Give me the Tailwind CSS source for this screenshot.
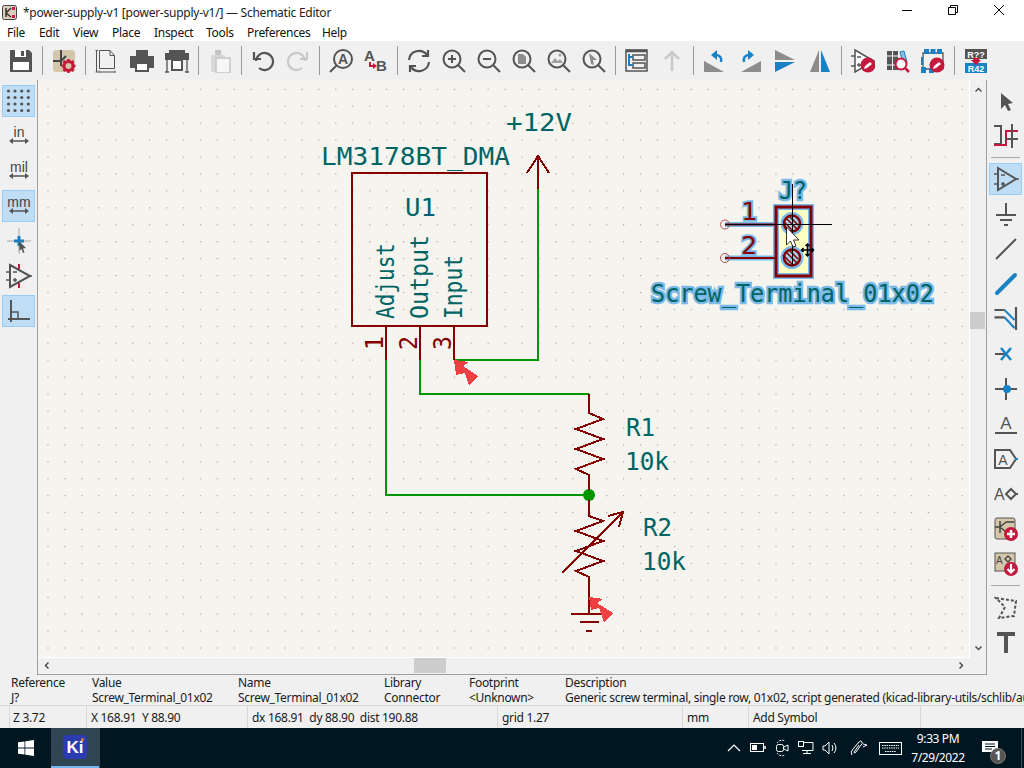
<!DOCTYPE html>
<html lang="en">
<head>
    <meta charset="UTF-8">
    <title>*power-supply-v1 [power-supply-v1/] — Schematic Editor</title>
    <script src="https://cdn.jsdelivr.net/npm/@tailwindcss/browser@4"></script>
</head>
<body class="w-[1024px] h-[768px] overflow-hidden flex flex-col bg-[#f0f0f0] text-[12px] leading-[15px] text-[#1a1a1a] font-['Noto_Sans',sans-serif]">

<!-- title bar -->
<div class="h-[24px] bg-white flex items-center text-[#222] relative">
    <svg class="ml-[2px] mr-[6px]" width="15" height="15" viewBox="0 0 15 15"><rect x=".5" y=".5" width="14" height="14" rx="2" fill="#dccfba" stroke="#444"/><path d="M4 3v9M4 8l5-5M4 8l5 4" stroke="#333" stroke-width="1.5" fill="none"/><rect x="10" y="2" width="3" height="3" fill="#d6125a"/><rect x="10" y="10" width="3" height="3" fill="#d6125a"/></svg>
    <span class="tracking-[-0.25px]">*power-supply-v1 [power-supply-v1/] — Schematic Editor</span>
    <div class="ml-auto flex h-full mr-[2px]">
        <div class="w-[46px] flex items-center justify-center pb-[4px]"><div class="w-[10px] h-px bg-black"></div></div>
        <div class="w-[46px] flex items-center justify-center pb-[4px]"><svg width="10" height="10" viewBox="0 0 10 10" fill="none" stroke="#000"><path d="M.5 2.5h7v7h-7zM2.5 2.5v-2h7v7h-2"/></svg></div>
        <div class="w-[46px] flex items-center justify-center pb-[4px]"><svg width="10" height="10" viewBox="0 0 10 10" stroke="#000"><path d="M0 0l10 10M10 0L0 10"/></svg></div>
    </div>
</div>

<!-- menu bar -->
<div class="h-[17px] pt-[1px] bg-white flex pl-[7px] gap-[14px] text-[#111] tracking-[-0.3px]">
    <span class="w-[18px]">File</span><span class="w-[20px]">Edit</span><span class="w-[25px]">View</span><span class="w-[28px]">Place</span><span class="w-[38px]">Inspect</span><span class="w-[27px]">Tools</span><span class="w-[61px]">Preferences</span><span>Help</span>
</div>

<!-- top toolbar -->
<div class="h-[39px] flex items-center pl-[3px]">
    <div class="w-[35px] flex justify-center"><svg width="24" height="24" viewBox="0 0 24 24"><path d="M1 1h19l3 3v19H1z" fill="#545454"/><rect x="4" y="13" width="16" height="8" fill="#fff"/><rect x="6" y="1" width="11" height="7" fill="#fff"/><rect x="12" y="2" width="3" height="5" fill="#545454"/></svg></div>
    <div class="w-[8px] flex justify-center"><div class="w-px h-[29px] bg-[#9a9a9a]"></div></div>
    <div class="w-[35px] flex justify-center"><svg width="24" height="24" viewBox="0 0 24 24"><rect x="1" y="1" width="22" height="22" rx="3" fill="#d3c6a9"/><path d="M9 1v8M1 12h9M9 8v9M9 12l5-5" stroke="#444" stroke-width="2" fill="none"/><g transform="translate(.5 1)"><circle cx="16" cy="16" r="4.500" fill="none" stroke="#c4183c" stroke-width="3"/><path d="M16 9v3M16 20v3M9 16h3M20 16h3M11 11l2 2M19 19l2 2M11 21l2-2M19 13l2-2" stroke="#c4183c" stroke-width="2.500"/></g></svg></div>
    <div class="w-[8px] flex justify-center"><div class="w-px h-[29px] bg-[#9a9a9a]"></div></div>
    <div class="w-[35px] flex justify-center"><svg width="24" height="24" viewBox="0 0 24 24" fill="none" stroke="#545454"><path d="M.5 1.500H3M.5 23H3M1.500 1.500V23M4.500 1.500H15l4.500 5V19.500H4.500zM15 1.500v5h4.500M4 21.500v3M20 21.500v3M4 23H20"/></svg></div>
    <div class="w-[35px] flex justify-center"><svg width="24" height="24" viewBox="0 0 24 24"><path d="M6 1h12v6H6z" fill="#545454"/><path d="M2 7h22v12h-5v-5H5v5H0V7z" fill="#545454"/><rect x="6" y="14" width="12" height="8" fill="#fff" stroke="#545454" stroke-width="2"/></svg></div>
    <div class="w-[35px] flex justify-center"><svg width="24" height="24" viewBox="0 0 24 24" fill="#545454"><rect x="4" y="1" width="16" height="4"/><rect y="4" width="24" height="7"/><path d="M2 11v12M22 11v12M0 23h4M20 23h4" stroke="#545454" stroke-width="1.300"/><rect x="7" y="11" width="10" height="10" fill="#fff" stroke="#545454" stroke-width="2"/></svg></div>
    <div class="w-[8px] flex justify-center"><div class="w-px h-[29px] bg-[#9a9a9a]"></div></div>
    <div class="w-[35px] flex justify-center"><svg width="24" height="24" viewBox="0 0 24 24"><rect x="3" y="6" width="14" height="17" fill="#d8d8d8"/><rect x="8" y="9" width="14" height="15" fill="#f6f6f6" stroke="#c4c4c4" stroke-width="1.500"/><rect x="7" y="1" width="6" height="5" fill="#c4c4c4"/></svg></div>
    <div class="w-[8px] flex justify-center"><div class="w-px h-[29px] bg-[#9a9a9a]"></div></div>
    <div class="w-[35px] flex justify-center"><svg width="24" height="24" viewBox="0 0 24 24" fill="none" stroke="#545454" stroke-width="2.200"><path d="M5 12a8.500 8.500 0 1 1 3 7"/><path d="M3 3v7h7"/></svg></div>
    <div class="w-[35px] flex justify-center"><svg width="24" height="24" viewBox="0 0 24 24" fill="none" stroke="#c8c8c8" stroke-width="2.200"><path d="M19 12a8.500 8.500 0 1 0-3 7"/><path d="M21 3v7h-7"/></svg></div>
    <div class="w-[8px] flex justify-center"><div class="w-px h-[29px] bg-[#9a9a9a]"></div></div>
    <div class="w-[35px] flex justify-center"><svg width="24" height="24" viewBox="0 0 24 24" fill="none" stroke="#545454" stroke-width="2"><circle cx="14" cy="10" r="9"/><path d="M8 16L1 23"/><text x="14" y="15" text-anchor="middle" font-size="14" font-weight="700" fill="#545454" stroke="none" font-family="Liberation Sans">A</text></svg></div>
    <div class="w-[35px] flex justify-center"><svg class="overflow-visible" width="24" height="24" viewBox="0 0 24 24"><text x="0" y="12" font-size="15" font-weight="700" fill="#545454" font-family="Liberation Sans">A</text><text x="12" y="22" font-size="15" font-weight="700" fill="#545454" font-family="Liberation Sans">B</text><path d="M6 13v4h4" fill="none" stroke="#c4183c" stroke-width="2"/><path d="M9 14l4 3-4 3z" fill="#c4183c"/></svg></div>
    <div class="w-[8px] flex justify-center"><div class="w-px h-[29px] bg-[#9a9a9a]"></div></div>
    <div class="w-[35px] flex justify-center"><svg width="24" height="24" viewBox="0 0 24 24" fill="none" stroke="#545454" stroke-width="2.200"><path d="M2 11A10 10 0 0 1 20 6M22 13A10 10 0 0 1 4 18"/><path d="M21 1v6h-6M3 23v-6h6"/></svg></div>
    <div class="w-[35px] flex justify-center"><svg width="24" height="24" viewBox="0 0 24 24" fill="none" stroke="#545454" stroke-width="2"><circle cx="10" cy="10" r="8.500"/><path d="M16 16l7 7M6 10h8M10 6v8"/></svg></div>
    <div class="w-[35px] flex justify-center"><svg width="24" height="24" viewBox="0 0 24 24" fill="none" stroke="#545454" stroke-width="2"><circle cx="10" cy="10" r="8.500"/><path d="M16 16l7 7M6 10h8"/></svg></div>
    <div class="w-[35px] flex justify-center"><svg width="24" height="24" viewBox="0 0 24 24" fill="none" stroke="#545454" stroke-width="2"><circle cx="10" cy="10" r="8.500"/><path d="M16 16l7 7"/><path d="M6 5h5l3 3v7H6z" fill="#8c8c8c" stroke="none"/></svg></div>
    <div class="w-[35px] flex justify-center"><svg width="24" height="24" viewBox="0 0 24 24" fill="none" stroke="#545454" stroke-width="2"><circle cx="10" cy="10" r="8.500"/><path d="M16 16l7 7"/><path d="M4 14l4-5 3 3 2-2 3 4z" fill="#a0a0a0" stroke="none"/><circle cx="13" cy="6" r="1.500" fill="#a0a0a0" stroke="none"/></svg></div>
    <div class="w-[35px] flex justify-center"><svg width="24" height="24" viewBox="0 0 24 24" fill="none" stroke="#545454" stroke-width="2"><circle cx="10" cy="10" r="8.500"/><path d="M16 16l7 7"/><path d="M7 4l8 7h-4l1 5-3-1z" fill="#8c8c8c" stroke="none"/></svg></div>
    <div class="w-[8px] flex justify-center"><div class="w-px h-[29px] bg-[#9a9a9a]"></div></div>
    <div class="w-[35px] flex justify-center"><svg width="24" height="24" viewBox="0 0 24 24" fill="none" stroke="#545454" stroke-width="1.500"><rect x="1" y="1" width="21" height="21"/><path d="M1 2h21" stroke-width="2.500"/><rect x="8" y="6" width="12" height="5"/><rect x="8" y="14" width="12" height="5"/><path d="M4 5v11h4M4 8h4" stroke="#1a81c4" stroke-width="2"/></svg></div>
    <div class="w-[35px] flex justify-center"><svg width="24" height="24" viewBox="0 0 24 24" fill="none" stroke="#c8c8c8" stroke-width="2.500"><path d="M12 22V3M5 10l7-7 7 7"/></svg></div>
    <div class="w-[8px] flex justify-center"><div class="w-px h-[29px] bg-[#9a9a9a]"></div></div>
    <div class="w-[35px] flex justify-center"><svg width="24" height="24" viewBox="0 0 24 24"><path d="M1 23V12l20 11z" fill="#8c8c8c"/><path d="M18 13c1-4-1-7-5-7" fill="none" stroke="#1a81c4" stroke-width="2.500"/><path d="M14 1l-6 5 6 5z" fill="#1a81c4"/></svg></div>
    <div class="w-[35px] flex justify-center"><svg width="24" height="24" viewBox="0 0 24 24"><path d="M23 23V12L3 23z" fill="#8c8c8c"/><path d="M6 13c-1-4 1-7 5-7" fill="none" stroke="#1a81c4" stroke-width="2.500"/><path d="M10 1l6 5-6 5z" fill="#1a81c4"/></svg></div>
    <div class="w-[35px] flex justify-center"><svg width="24" height="24" viewBox="0 0 24 24"><path d="M2 1v10h20z" fill="#8c8c8c"/><path d="M2 13v10l20-10z" fill="#1a81c4"/></svg></div>
    <div class="w-[35px] flex justify-center"><svg width="24" height="24" viewBox="0 0 24 24"><path d="M11 1v22H2z" fill="#8c8c8c"/><path d="M13 1v22h9z" fill="#1a81c4"/></svg></div>
    <div class="w-[8px] flex justify-center"><div class="w-px h-[29px] bg-[#9a9a9a]"></div></div>
    <div class="w-[35px] flex justify-center"><svg width="24" height="24" viewBox="0 0 24 24"><path d="M4 1l19 11-19 11z" fill="#fff" stroke="#545454" stroke-width="1.500"/><path d="M0 7h4M0 17h4M6 8h4M6 16h4M8 14v4" stroke="#545454" stroke-width="1.300"/><circle cx="17" cy="16" r="7.500" fill="#c4183c"/><path d="M13 20l1-3 5-4 2 2-5 4z" fill="#fff"/></svg></div>
    <div class="w-[35px] flex justify-center"><svg width="24" height="24" viewBox="0 0 24 24"><rect x="1" y="2" width="5" height="19" fill="#545454"/><rect x="7" y="2" width="5" height="19" fill="#545454"/><path d="M14 3l4-1 3 11-4 1z" fill="#8fc0e4" stroke="#1a81c4"/><path d="M1 7h11M1 16h11" stroke="#fff"/><circle cx="15" cy="15" r="5.500" fill="#ffffffcc" stroke="#c4183c" stroke-width="2"/><path d="M19 19l4 4" stroke="#c4183c" stroke-width="2.500"/></svg></div>
    <div class="w-[35px] flex justify-center"><svg width="24" height="24" viewBox="0 0 24 24"><path d="M2 4h20v16H2z" fill="none" stroke="#545454" stroke-width="1.300"/><path d="M3 0h5v5H3zM9.500 0h5v5h-5zM16 0h5v5h-5zM0 18h5v6H0zM8 19h5v5H8zM0 8h2v8H0z" fill="#1a81c4"/><circle cx="16" cy="16" r="7.500" fill="#c4183c"/><path d="M12 20l1-3 5-4 2 2-5 4z" fill="#fff"/></svg></div>
    <div class="w-[8px] flex justify-center"><div class="w-px h-[29px] bg-[#9a9a9a]"></div></div>
    <div class="w-[35px] flex justify-center"><svg width="24" height="24" viewBox="0 0 24 24" font-family="Liberation Sans" font-weight="700" font-size="9" text-anchor="middle" fill="#fff"><rect x="1" y="0" width="22" height="10" fill="#545454"/><rect x="1" y="14" width="22" height="10" fill="#1a81c4"/><text x="12" y="8.500">R??</text><text x="12" y="22.500">R42</text><path d="M9 9h6v2h2l-5 5-5-5h2z" fill="#c4183c"/></svg></div>
</div>

<!-- middle: left toolbar, canvas, right toolbar -->
<div class="h-[595px] flex">
    <div class="w-[37px] pt-[5px] pl-[2px] flex flex-col gap-[3px]">
        <div class="w-[33px] h-[32px] flex items-center justify-center bg-[#bfddf5] border border-[#99ccf5]"><svg width="26" height="26" viewBox="0 0 26 26" fill="#545454"><circle cx="2.500" cy="3" r="1.600"/><circle cx="9" cy="3" r="1.600"/><circle cx="15.700" cy="3" r="1.600"/><circle cx="22.300" cy="3" r="1.600"/><circle cx="2.500" cy="9.500" r="1.600"/><circle cx="9" cy="9.500" r="1.600"/><circle cx="15.700" cy="9.500" r="1.600"/><circle cx="22.300" cy="9.500" r="1.600"/><circle cx="2.500" cy="16" r="1.600"/><circle cx="9" cy="16" r="1.600"/><circle cx="15.700" cy="16" r="1.600"/><circle cx="22.300" cy="16" r="1.600"/><circle cx="2.500" cy="22.500" r="1.600"/><circle cx="9" cy="22.500" r="1.600"/><circle cx="15.700" cy="22.500" r="1.600"/><circle cx="22.300" cy="22.500" r="1.600"/></svg></div>
        <div class="w-[33px] h-[32px] flex items-center justify-center"><svg width="24" height="24" viewBox="0 0 24 24"><text x="12" y="13" text-anchor="middle" font-size="14" fill="#444" font-family="Liberation Sans">in</text><path d="M4 17h16" stroke="#545454" stroke-width="1.500"/><path d="M2 17l4-3v6zM22 17l-4-3v6z" fill="#545454"/></svg></div>
        <div class="w-[33px] h-[32px] flex items-center justify-center"><svg width="24" height="24" viewBox="0 0 24 24"><text x="12" y="13" text-anchor="middle" font-size="14" fill="#444" font-family="Liberation Sans">mil</text><path d="M4 17h16" stroke="#545454" stroke-width="1.500"/><path d="M2 17l4-3v6zM22 17l-4-3v6z" fill="#545454"/></svg></div>
        <div class="w-[33px] h-[32px] flex items-center justify-center bg-[#bfddf5] border border-[#99ccf5]"><svg width="24" height="24" viewBox="0 0 24 24"><text x="12" y="13" text-anchor="middle" font-size="14" fill="#444" font-family="Liberation Sans">mm</text><path d="M4 17h16" stroke="#545454" stroke-width="1.500"/><path d="M2 17l4-3v6zM22 17l-4-3v6z" fill="#545454"/></svg></div>
        <div class="w-[33px] h-[32px] flex items-center justify-center"><svg width="26" height="26" viewBox="0 0 26 26"><path d="M13 0v26M1 13h24" stroke="#a8a8a8"/><path d="M8 11.500h10v3H8zM11.500 8h3v10h-3z" fill="#1a81c4"/><path d="M13 13l7 7-3 .5 1.500 4-1.500.5-1.500-4-2 2z" fill="#545454"/></svg></div>
        <div class="w-[33px] h-[32px] flex items-center justify-center"><svg width="26" height="26" viewBox="0 0 26 26" fill="none" stroke="#545454" stroke-width="1.500"><path d="M4 2l20 11L4 24z" stroke-width="2"/><path d="M0 9h4M0 17h4M24 13h2M7 9h4M7 17h4M9 15v4"/><path d="M13 1v5M13 20v5" stroke="#c4183c" stroke-width="2"/></svg></div>
        <div class="w-[33px] h-[32px] flex items-center justify-center bg-[#bfddf5] border border-[#99ccf5]"><svg width="24" height="24" viewBox="0 0 24 24" fill="none" stroke="#545454"><path d="M4 1v22M1 20h22" stroke-width="2"/><path d="M4 13h7v7" stroke-width="1.500"/></svg></div>
    </div>

    <div class="flex-1 flex flex-col border-l border-[#a0a0a0] border-b">
        <div class="flex h-[578px]">
            <!-- schematic canvas: coordinates in the viewBox are screen pixels -->
            <svg class="border-b border-r border-white bg-[#f5f4ef]" width="932" height="578" viewBox="38 80 931 577" font-family="DejaVu Sans Mono" fill="#006464">
                <defs>
                    <pattern id="dots" patternUnits="userSpaceOnUse" x="13.560" y="4.100" width="16.930" height="16.930"><rect width="1.200" height="1.200" fill="#a4a4a0"/></pattern>
                </defs>
                <rect x="38" y="80" width="931" height="577" fill="url(#dots)"/>

                <g fill="none" stroke="#009600" stroke-width="2" shape-rendering="crispEdges">
                    <path d="M454 360H538V189M386 360V495H589M420 360V394H589"/>
                </g>
                <circle cx="589" cy="495" r="6" fill="#009600"/>

                <g fill="none" stroke="#840000" stroke-width="2" shape-rendering="crispEdges">
                    <rect x="352" y="173" width="135" height="153"/>
                    <path d="M386 326v34M420 326v34M454 326v34"/>
                    <path d="M538 189V156M527 173l11-17 11 17"/>
                    <path d="M589 394V413L603 419L576 429L603 439L576 449L603 459L576 469L589 475V490"/>
                    <path d="M589 500V516L603 521L576 531L603 541L576 551L603 561L576 571L589 577V614"/>
                    <path d="M562 573L623 512M608 516L623 512L619 527"/>
                    <path d="M571 614H607M580 622H599M586 631H592"/>
                </g>

                <g fill="#ee3f42" shape-rendering="crispEdges">
                    <path d="M454 360L469 362L463 366L478 376L469 385L465 373L456 375z"/>
                    <path d="M589 597L603 599L597 603L613 613L604 622L599 608L591 610z"/>
                </g>

                <text x="321" y="165" font-size="25" textLength="189" lengthAdjust="spacingAndGlyphs">LM3178BT_DMA</text>
                <text x="506" y="131" font-size="25" textLength="66" lengthAdjust="spacingAndGlyphs">+12V</text>
                <text x="405" y="216" font-size="25" textLength="31" lengthAdjust="spacingAndGlyphs">U1</text>
                <text transform="translate(394 319) rotate(-90)" font-size="25" textLength="76" lengthAdjust="spacingAndGlyphs">Adjust</text>
                <text transform="translate(428 319) rotate(-90)" font-size="25" textLength="84" lengthAdjust="spacingAndGlyphs">Output</text>
                <text transform="translate(462 319) rotate(-90)" font-size="25" textLength="64" lengthAdjust="spacingAndGlyphs">Input</text>
                <text x="626" y="436" font-size="25" textLength="29" lengthAdjust="spacingAndGlyphs">R1</text>
                <text x="625" y="470" font-size="25" textLength="44" lengthAdjust="spacingAndGlyphs">10k</text>
                <text x="643" y="536" font-size="25" textLength="29" lengthAdjust="spacingAndGlyphs">R2</text>
                <text x="642" y="570" font-size="25" textLength="44" lengthAdjust="spacingAndGlyphs">10k</text>
                <g fill="#840000" font-size="25">
                    <text transform="translate(383 350) rotate(-90)" textLength="14" lengthAdjust="spacingAndGlyphs">1</text>
                    <text transform="translate(417 350) rotate(-90)" textLength="14" lengthAdjust="spacingAndGlyphs">2</text>
                    <text transform="translate(451 350) rotate(-90)" textLength="14" lengthAdjust="spacingAndGlyphs">3</text>
                </g>

                <!-- selected symbol being placed -->
                <g fill="none">
                    <path d="M725 224.500H775M725 258H775" stroke="#7ab9e8" stroke-width="5"/>
                    <rect x="776" y="207" width="35" height="69" fill="#ffffc2" stroke="#7ab9e8" stroke-width="6"/>
                    <circle cx="792" cy="223.500" r="10" stroke="#7ab9e8" stroke-width="3"/>
                    <circle cx="792" cy="257.500" r="10" stroke="#7ab9e8" stroke-width="3"/>
                    <rect x="776" y="207" width="35" height="69" stroke="#840000" stroke-width="3"/>
                    <path d="M725 224.500H775M725 258H775" stroke="#840000" stroke-width="2"/>
                    <circle cx="725" cy="224.500" r="4.500" stroke="#b05050"/>
                    <circle cx="725" cy="258" r="4.500" stroke="#b05050"/>
                    <circle cx="792" cy="223.500" r="8" fill="#9fd0ee" stroke="#840000" stroke-width="2.500"/>
                    <circle cx="792" cy="257.500" r="8" fill="#9fd0ee" stroke="#840000" stroke-width="2.500"/>
                    <path d="M786 218l12 12M783 221l9 9M789 216l9 9M786 252l12 12M783 255l9 9M789 250l9 9" stroke="#840000" stroke-width="1.500"/>
                </g>
                <g stroke="#7ab9e8" stroke-width="4.500" paint-order="stroke">
                    <text x="651" y="302" font-size="25" textLength="283" lengthAdjust="spacingAndGlyphs" fill="#006464">Screw_Terminal_01x02</text>
                    <text x="779" y="199" font-size="25" textLength="28" lengthAdjust="spacingAndGlyphs" fill="#006464">J?</text>
                    <text x="741" y="220" font-size="25" textLength="16" lengthAdjust="spacingAndGlyphs" fill="#840000" stroke-width="3.500">1</text>
                    <text x="741" y="254" font-size="25" textLength="16" lengthAdjust="spacingAndGlyphs" fill="#840000" stroke-width="3.500">2</text>
                </g>

                <!-- crosshair and mouse cursor -->
                <path d="M792 184V265M725 224.500H832" stroke="#000" fill="none" shape-rendering="crispEdges"/>
                <path d="M786.500 227V245L790.500 241L793 247L796 246L793.500 240L799 240z" fill="#fff" stroke="#000" stroke-width=".8"/>
                <path d="M807.500 244V256M801.500 250H813.500M805.500 246L807.500 244L809.500 246M805.500 254L807.500 256L809.500 254M803.500 248L801.500 250L803.500 252M811.500 248L813.500 250L811.500 252" fill="none" stroke="#000" stroke-width="1.500"/>
            </svg>
            <!-- vertical scrollbar -->
            <div class="w-[16px] relative">
                <svg class="absolute left-[5px] top-[7px]" width="7" height="5" viewBox="0 0 7 5" fill="none" stroke="#505050" stroke-width="1.500"><path d="M.5 4.500l3-3 3 3"/></svg>
                <div class="absolute left-0 top-[232px] w-[15px] h-[17px] bg-[#cdcdcd]"></div>
                <svg class="absolute left-[5px] bottom-[7px]" width="7" height="5" viewBox="0 0 7 5" fill="none" stroke="#505050" stroke-width="1.500"><path d="M.5.500l3 3 3-3"/></svg>
            </div>
        </div>
        <!-- horizontal scrollbar -->
        <div class="flex-1 relative">
            <svg class="absolute left-[6px] top-[4px]" width="5" height="7" viewBox="0 0 5 7" fill="none" stroke="#505050" stroke-width="1.500"><path d="M4.500.500l-3 3 3 3"/></svg>
            <div class="absolute left-[376px] top-0 w-[32px] h-[15px] bg-[#cdcdcd]"></div>
            <svg class="absolute left-[921px] top-[4px]" width="5" height="7" viewBox="0 0 5 7" fill="none" stroke="#505050" stroke-width="1.500"><path d="M.5.500l3 3-3 3"/></svg>
        </div>
    </div>

    <div class="w-[38px] border-l border-[#a0a0a0] pt-[5px] pl-[2px] flex flex-col gap-[3px]">
        <div class="w-[33px] h-[32px] flex items-center justify-center"><svg width="24" height="24" viewBox="0 0 24 24"><path d="M7 4l12 10-5 1 3 6-3 1-3-6-4 4z" fill="#545454"/></svg></div>
        <div class="w-[33px] h-[32px] flex items-center justify-center"><svg width="26" height="26" viewBox="0 0 26 26" fill="none" stroke-width="2"><path d="M1 3h7v18h-7" stroke="#545454"/><path d="M1 22h12V8h12" stroke="#c4183c"/><path d="M19 1v24M13 16h12" stroke="#545454"/></svg></div>
        <div class="h-px mt-[2px] mb-[2px] w-[29px] ml-[2px] bg-[#a8a8a8]"></div>
        <div class="w-[33px] h-[32px] flex items-center justify-center bg-[#bfddf5] border border-[#99ccf5]"><svg width="26" height="26" viewBox="0 0 26 26" fill="none" stroke="#545454" stroke-width="1.500"><path d="M5 2l18 11L5 24z" stroke-width="2"/><path d="M1 8h4M1 18h4M23 13h3M8 9h4M8 18h4M10 16v4"/></svg></div>
        <div class="w-[33px] h-[32px] flex items-center justify-center"><svg width="24" height="24" viewBox="0 0 24 24" fill="none" stroke="#545454" stroke-width="2"><path d="M12 1v12M2 13h20M6 18h12M10 23h4"/></svg></div>
        <div class="w-[33px] h-[32px] flex items-center justify-center"><svg width="24" height="24" viewBox="0 0 24 24" fill="none" stroke="#545454" stroke-width="2"><path d="M2 22L22 2"/></svg></div>
        <div class="w-[33px] h-[32px] flex items-center justify-center"><svg width="24" height="24" viewBox="0 0 24 24" fill="none" stroke="#1a81c4" stroke-width="4" stroke-linecap="round"><path d="M3 21L21 3"/></svg></div>
        <div class="w-[33px] h-[32px] flex items-center justify-center"><svg width="24" height="24" viewBox="0 0 24 24" fill="none" stroke-width="2"><path d="M10.500 3l10 10M10.500 10.300l10 10.700" stroke="#1a81c4"/><path d="M.5 3h10M.5 10.300h10M22 0v23" stroke="#545454" stroke-width="2.200"/></svg></div>
        <div class="w-[33px] h-[32px] flex items-center justify-center"><svg width="24" height="24" viewBox="0 0 24 24" fill="none" stroke-width="2"><path d="M1 12h12" stroke="#545454"/><path d="M7 6l10 12M17 6L7 18" stroke="#1a81c4" stroke-width="2.500"/></svg></div>
        <div class="w-[33px] h-[32px] flex items-center justify-center"><svg width="24" height="24" viewBox="0 0 24 24" fill="none" stroke="#545454" stroke-width="2"><path d="M12 1v22M1 12h22"/><circle cx="13" cy="12" r="4" fill="#1a81c4" stroke="none"/></svg></div>
        <div class="w-[33px] h-[32px] flex items-center justify-center"><svg width="24" height="24" viewBox="0 0 24 24"><text x="12" y="17" text-anchor="middle" font-size="17" fill="#545454" font-family="Liberation Sans">A</text><path d="M1 21h22" stroke="#545454" stroke-width="2"/></svg></div>
        <div class="w-[33px] h-[32px] flex items-center justify-center"><svg width="24" height="24" viewBox="0 0 24 24"><path d="M1 3h15l6 9-6 9H1z" fill="none" stroke="#545454" stroke-width="2"/><text x="9" y="18" text-anchor="middle" font-size="14" fill="#545454" font-family="Liberation Sans">A</text><path d="M21 11h3v2h-3z" fill="#1a81c4"/></svg></div>
        <div class="w-[33px] h-[32px] flex items-center justify-center"><svg width="24" height="24" viewBox="0 0 24 24"><text x="0" y="18" font-size="16" fill="#545454" font-family="Liberation Sans">A</text><path d="M17 7l5 5-5 5-5-5z" fill="none" stroke="#545454" stroke-width="2"/><path d="M22 12h2" stroke="#545454" stroke-width="2"/></svg></div>
        <div class="w-[33px] h-[32px] flex items-center justify-center"><svg width="24" height="24" viewBox="0 0 24 24"><rect x="1" y="1" width="20" height="21" rx="2" fill="#d3c6a9" stroke="#545454"/><path d="M6 4v12M6 10l6-5M6 10l6 5M1 10h5M12 5h8" stroke="#444" stroke-width="1.500" fill="none"/><circle cx="17" cy="17" r="7" fill="#c4183c"/><path d="M13 17h8M17 13v8" stroke="#fff" stroke-width="2.500"/></svg></div>
        <div class="w-[33px] h-[32px] flex items-center justify-center"><svg width="24" height="24" viewBox="0 0 24 24"><rect x="1" y="1" width="20" height="18" fill="#d3c6a9" stroke="#545454"/><text x="2" y="12" font-size="10" fill="#444" font-family="Liberation Sans">A</text><path d="M14 4l3 3-3 3-3-3z" fill="none" stroke="#444" stroke-width="1.300"/><circle cx="17" cy="17" r="7" fill="#c4183c"/><path d="M17 12v8M13.500 17l3.500 3.500 3.500-3.500" stroke="#fff" stroke-width="2.200" fill="none"/></svg></div>
        <div class="h-px w-[29px] ml-[2px] mt-[2px] mb-[2px] bg-[#a8a8a8]"></div>
        <div class="w-[33px] h-[32px] flex items-center justify-center"><svg width="24" height="24" viewBox="0 0 24 24" fill="none" stroke="#545454" stroke-width="2" stroke-dasharray="3 2"><path d="M2 3l20 3-2 15-15 2 6-11z"/></svg></div>
        <div class="w-[33px] h-[32px] flex items-center justify-center"><svg width="24" height="24" viewBox="0 0 24 24" fill="#545454"><path d="M3 2h18v4h-7v17h-4V6H3z"/></svg></div>
    </div>
</div>

<!-- message panel -->
<div class="h-[31px] flex whitespace-nowrap overflow-hidden border-b border-[#d8d8d8] tracking-[-0.3px]">
    <div class="w-[92px] shrink-0 pl-[11px]"><div>Reference</div><div>J?</div></div>
    <div class="w-[146px] shrink-0"><div>Value</div><div>Screw_Terminal_01x02</div></div>
    <div class="w-[146px] shrink-0"><div>Name</div><div>Screw_Terminal_01x02</div></div>
    <div class="w-[85px] shrink-0"><div>Library</div><div>Connector</div></div>
    <div class="w-[96px] shrink-0"><div>Footprint</div><div>&lt;Unknown&gt;</div></div>
    <div class="shrink-0"><div>Description</div><div>Generic screw terminal, single row, 01x02, script generated (kicad-library-utils/schlib/au</div></div>
</div>

<!-- status bar -->
<div class="h-[22px] flex items-center whitespace-nowrap tracking-[-0.3px]">
    <div class="w-[10px] h-full border-r border-[#d8d8d8]"></div>
    <div class="w-[77px] h-full pl-[3px] flex items-center border-r border-[#d8d8d8]">Z 3.72</div>
    <div class="w-[161px] h-full pl-[4px] flex items-center border-r border-[#d8d8d8]">X 168.91&nbsp; Y 88.90</div>
    <div class="w-[250px] h-full pl-[4px] flex items-center border-r border-[#d8d8d8]">dx 168.91&nbsp; dy 88.90&nbsp; dist 190.88</div>
    <div class="w-[185px] h-full pl-[4px] flex items-center border-r border-[#d8d8d8]">grid 1.27</div>
    <div class="w-[66px] h-full pl-[4px] flex items-center border-r border-[#d8d8d8]">mm</div>
    <div class="w-[172px] h-full pl-[4px] flex items-center border-r border-[#d8d8d8]">Add Symbol</div>
</div>

<!-- taskbar -->
<div class="h-[40px] bg-[#001722] flex items-center text-white relative">
    <div class="w-[51px] flex justify-center"><svg width="16" height="16" viewBox="0 0 16 16" fill="#fff"><path d="M0 2.300l6.500-.9v6.200H0zM7.300 1.300L16 0v7.600H7.300zM0 8.400h6.500v6.200L0 13.700zM7.300 8.400H16V16l-8.700-1.300z"/></svg></div>
    <div class="w-[48px] h-full bg-[#2f4552] border-b-2 border-[#76b9ed] flex items-center justify-center">
        <div class="w-[24px] h-[24px] rounded-[4px] bg-[#2a3cb0] relative flex items-center justify-center text-[17px] font-bold font-['Liberation_Sans',sans-serif]">Ki<div class="absolute right-[3px] top-[3px] w-[3px] h-[3px] rounded-full bg-[#f08020]"></div></div>
    </div>
    <div class="w-px h-full bg-[#2f4552]"></div>
    <div class="ml-auto flex items-center h-full">
        <div class="w-[24px] flex justify-center"><svg width="14" height="8" viewBox="0 0 14 8" fill="none" stroke="#fff" stroke-width="1.200"><path d="M1 7l6-6 6 6"/></svg></div>
        <div class="w-[24px] flex justify-center"><svg width="16" height="10" viewBox="0 0 16 10" fill="none" stroke="#fff"><rect x=".5" y=".5" width="13" height="8"/><rect x="2" y="2" width="5" height="5" fill="#fff" stroke="none"/><path d="M15 3v3" stroke-width="1.500"/></svg></div>
        <div class="w-[24px] flex justify-center"><svg width="14" height="18" viewBox="0 0 14 18" fill="none" stroke="#fff"><path d="M2 4a6 6 0 0 1 8-2M2 14a6 6 0 0 0 8 2" stroke-dasharray="2 1"/><rect x="1.500" y="5.500" width="7" height="7" rx="2"/><path d="M9 8l4-2v6l-4-2"/></svg></div>
        <div class="w-[24px] flex justify-center"><svg width="16" height="14" viewBox="0 0 16 14" fill="none" stroke="#fff"><path d="M4 1.500h11v8H4M9 9.500v3M5 12.500h8"/><rect x=".5" y=".5" width="5" height="5" fill="#001722"/></svg></div>
        <div class="w-[24px] flex justify-center"><svg width="16" height="14" viewBox="0 0 16 14" fill="none" stroke="#fff"><path d="M1 5h2l4-4v12l-4-4H1zM10 4q2 3 0 6M12 2q4 5 0 10"/></svg></div>
        <div class="w-[34px] flex justify-center"><svg width="18" height="18" viewBox="0 0 18 18" fill="none" stroke="#fff"><path d="M2 16q-2-3 1-6l6-7q2-2 3 0t-1 3l-5 7q-2 2-2 0l5-7M13 5l4 1-4 2"/></svg></div>
        <div class="w-[28px] flex justify-center"><svg width="23" height="13" viewBox="0 0 23 13" fill="none" stroke="#fff"><rect x=".5" y=".5" width="22" height="12"/><path d="M3 3.500h17M3 6h17M6 9.500h11" stroke-dasharray="1.500 .8"/></svg></div>
        <div class="w-[68px] text-center text-[12px] leading-[19px] tracking-[-0.4px]"><div>9:33 PM</div><div>7/29/2022</div></div>
        <div class="w-[38px] relative flex justify-center pr-[2px]">
            <svg width="16" height="15" viewBox="0 0 16 15"><path d="M0 0h16v11h-4l-3 4v-4H0z" fill="#fff"/><path d="M3 3h10M3 5.500h10M3 8h7" stroke="#001722"/></svg>
            <div class="absolute left-[18px] top-[7px] w-[16px] h-[16px] rounded-full bg-[#555] border border-[#777] text-[12px] leading-[14px] text-center font-bold">1</div>
        </div>
        <div class="w-[11px]"></div>
        <div class="w-px h-full bg-[#3a4a55]"></div>
        <div class="w-[2px]"></div>
    </div>
</div>
</body>
</html>
